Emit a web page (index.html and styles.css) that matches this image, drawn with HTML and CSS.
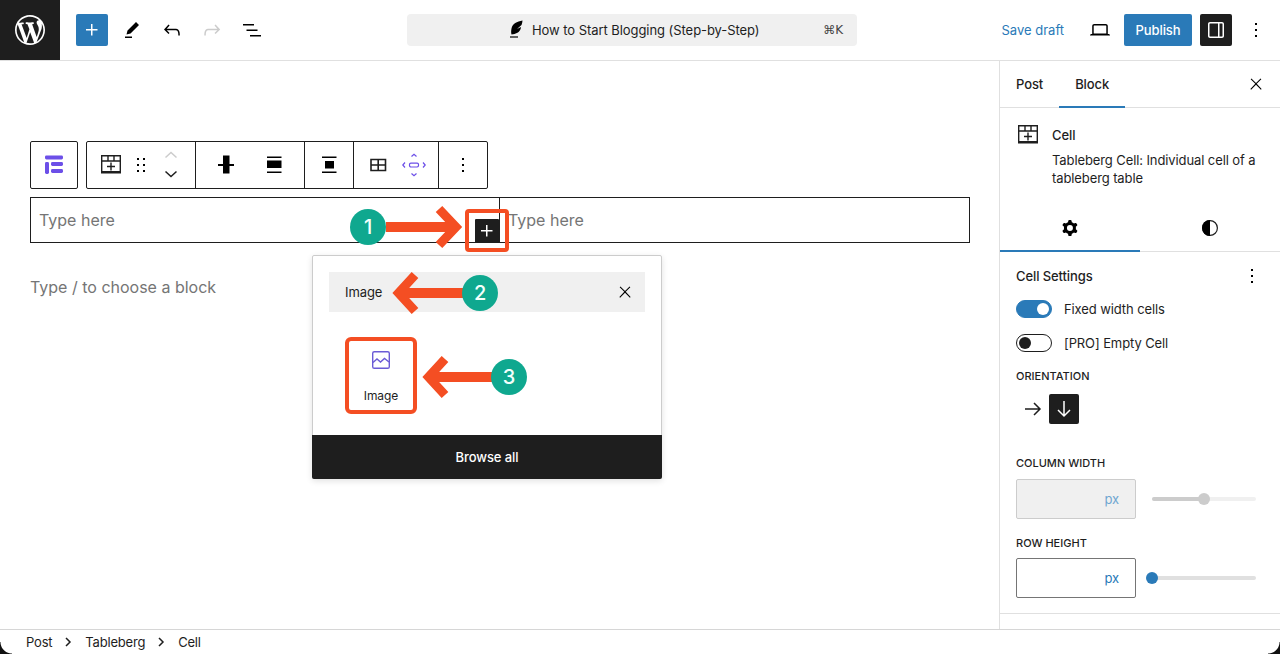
FILE: index.html
```html
<!DOCTYPE html>
<html lang="en">
<head>
    <meta charset="UTF-8">
    <meta name="viewport" content="width=device-width, initial-scale=1.0">
    <title>How to Start Blogging (Step-by-Step)</title>
    <link rel="stylesheet" href="styles.css">
</head>
<body>
    <header class="topbar">
        <div class="wp-logo">
            <svg width="30" height="30" viewBox="0 0 20 20"><path fill="#fff" d="M20 10c0-5.51-4.49-10-10-10C4.48 0 0 4.49 0 10c0 5.52 4.48 10 10 10 5.51 0 10-4.48 10-10zM7.78 15.37L4.37 6.22c.55-.02 1.17-.08 1.17-.08.5-.06.44-1.13-.06-1.11 0 0-1.45.11-2.37.11-.18 0-.37 0-.58-.01C4.12 2.69 6.87 1.11 10 1.11c2.33 0 4.45.87 6.05 2.34-.68-.11-1.65.39-1.65 1.58 0 .74.45 1.36.9 2.1.35.61.55 1.36.55 2.46 0 1.49-1.4 5-1.4 5l-3.03-8.37c.54-.02.82-.17.82-.17.5-.05.44-1.25-.06-1.22 0 0-1.44.12-2.38.12-.87 0-2.33-.12-2.33-.12-.5-.03-.56 1.2-.06 1.22l.92.08 1.26 3.41zM17.41 10c.24-.64.74-1.87.43-4.25.7 1.29 1.05 2.71 1.05 4.25 0 3.29-1.73 6.24-4.4 7.78.97-2.59 1.94-5.2 2.92-7.78zM6.1 18.09C3.12 16.65 1.11 13.53 1.11 10c0-1.3.23-2.48.72-3.59C3.25 10.3 4.67 14.2 6.1 18.09zm4.03-6.63l2.58 6.98c-.86.29-1.76.45-2.71.45-.79 0-1.57-.11-2.29-.33.81-2.38 1.62-4.74 2.42-7.1z"/></svg>
        </div>
        <div class="top-tools">
            <span class="icon-btn primary"><svg width="24" height="24" viewBox="0 0 24 24"><path fill="#fff" d="M11 12.5V17.5H12.5V12.5H17.5V11H12.5V6H11V11H6V12.5H11Z"/></svg></span>
            <span class="icon-btn"><svg width="24" height="24" viewBox="0 0 24 24"><path d="m19 7-3-3-8.5 8.5-1 4 4-1L19 7Zm-7 11.5H5V20h7v-1.5Z"/></svg></span>
            <span class="icon-btn"><svg width="24" height="24" viewBox="0 0 24 24"><path d="M18.3 11.7c-.6-.6-1.4-.9-2.3-.9H6.7l2.9-3.3-1.1-1-4.5 5L8.5 16l1-1-2.7-2.7H16c.5 0 .9.2 1.3.5 1 1 1 3.4 1 4.5v.3h1.5v-.2c0-1.5 0-4.3-1.5-5.7z"/></svg></span>
            <span class="icon-btn"><svg width="24" height="24" viewBox="0 0 24 24"><path fill="#ccc" d="M15.6 6.5l-1.1 1 2.9 3.3H8c-.9 0-1.7.3-2.3.9-1.4 1.5-1.4 4.2-1.4 5.6v.2h1.5v-.3c0-1.1 0-3.5 1-4.5.3-.3.7-.5 1.3-.5h9.2L14.5 15l1.1 1.1 4.6-4.6-4.6-5z"/></svg></span>
            <span class="icon-btn"><svg width="24" height="24" viewBox="0 0 24 24"><path d="M3 6h11v1.5H3V6Zm3.5 5.5h11V13h-11v-1.5ZM21 17H10v1.5h11V17Z"/></svg></span>
        </div>
        <div class="doc-bar">
            <svg width="24" height="24" viewBox="0 0 24 24"><path d="M18.5 2.500C13 3.500 8.500 5.500 7.500 10.500C7 13 7 15 7.500 16.500L10.500 16C14 15 16.500 13 17 9L13 11L17.500 7C18 5.500 18.500 4 18.500 2.500Z"/><path d="M6 18.400h8v1.200H6z"/></svg>
            <span class="doc-title">How to Start Blogging (Step-by-Step)</span>
            <span class="doc-key">⌘K</span>
        </div>
        <div class="top-actions">
            <span class="save-draft">Save draft</span>
            <span class="icon-btn"><svg width="24" height="24" viewBox="0 0 24 24"><path d="M20.5 16h-.7V8c0-1.1-.9-2-2-2H6.2c-1.1 0-2 .9-2 2v8h-.7c-.8 0-1.5.7-1.5 1.5h20c0-.8-.7-1.5-1.5-1.5zM5.7 8c0-.3.2-.5.5-.5h11.6c.3 0 .5.2.5.5v7.6H5.7V8z"/></svg></span>
            <span class="publish">Publish</span>
            <span class="icon-btn dark"><svg width="24" height="24" viewBox="0 0 24 24"><path fill="#fff" d="M18 4H6c-1.1 0-2 .9-2 2v12c0 1.1.9 2 2 2h12c1.1 0 2-.9 2-2V6c0-1.1-.9-2-2-2zm-4 14.5H6c-.3 0-.5-.2-.5-.5V6c0-.3.2-.5.5-.5h8v13zm4.5-.5c0 .3-.2.5-.5.5h-2.5v-13H18c.3 0 .5.2.5.5v12z"/></svg></span>
            <span class="icon-btn"><svg width="24" height="24" viewBox="0 0 24 24"><path d="M13 19h-2v-2h2v2zm0-6h-2v-2h2v2zm0-6h-2V5h2v2z"/></svg></span>
        </div>
    </header>

    <div class="main">
        <main class="editor">
            <div class="block-toolbar">
                <div class="tb-box tb-logo">
                    <svg width="24" height="24" viewBox="0 0 24 24"><g fill="#6c4fe8"><rect x="3" y="2.500" width="18" height="4" rx="1.400"/><rect x="3" y="9" width="4" height="12" rx="1.400"/><rect x="9" y="9" width="12" height="4" rx="1.400"/><rect x="9" y="16" width="12" height="4" rx="1.400"/></g></svg>
                </div>
                <div class="tb-box">
                    <div class="tb-group tb-move">
                        <svg width="24" height="24" viewBox="0 1 24 24"><path fill="none" stroke="#1e1e1e" stroke-width="1.400" d="M2.700 3.700h18.600v16.600H2.700zM2.700 9h18.600M9 3.700V9M15 3.700V9"/><path fill="#1e1e1e" d="M2 19h20v2.500H2zM11.300 10.500h1.400v3.300H16v1.400h-3.300v3.300h-1.400v-3.300H8v-1.400h3.300z"/></svg>
                        <svg width="24" height="24" viewBox="0 0 24 24"><path d="M8 7h2V5H8v2zm0 6h2v-2H8v2zm0 6h2v-2H8v2zm6-14v2h2V5h-2zm0 8h2v-2h-2v2zm0 6h2v-2h-2v2z"/></svg>
                        <svg width="24" height="34" viewBox="0 0 24 34"><path fill="none" stroke="#ccc" stroke-width="1.500" d="M6.500 9.500 12 4.500l5.500 5"/><path fill="none" stroke="#1e1e1e" stroke-width="1.500" d="M6.500 23.500 12 28.500l5.500-5"/></svg>
                    </div>
                    <div class="tb-group tb-align">
                        <svg width="24" height="24" viewBox="0 0 24 24"><path d="M4 11h16v2H4z"/><path d="M9 2.500h6.500v18H9z"/></svg>
                        <svg width="24" height="24" viewBox="0 0 24 24"><path d="M5 3.500h14.500V5H5zM5 7.500h14.500v7.500H5zM5 18.500h14.500V20H5z"/></svg>
                    </div>
                    <div class="tb-group tb-single">
                        <svg width="24" height="24" viewBox="0 0 24 24"><path d="M5 3.500h14.500V5H5zM8 8h9v7.500H8zM5 18.500h14.500V20H5z"/></svg>
                    </div>
                    <div class="tb-group tb-size">
                        <svg width="24" height="24" viewBox="0 0 24 24"><path fill="none" stroke="#1e1e1e" stroke-width="1.600" d="M5 6.500h14.500v11H5zM5 12h14.500M12.200 6.500v11"/></svg>
                        <svg width="24" height="24" viewBox="0 0 24 24" fill="none" stroke="#6c4fe8" stroke-width="1.200"><rect x="7.500" y="10.200" width="9" height="3.800" rx="1.400"/><path d="M9.500 3.500 12 1.300l2.500 2.200M9.500 20.500 12 22.700l2.500-2.200M3 9.500.8 12 3 14.500M21 9.500 23.200 12 21 14.500"/></svg>
                    </div>
                    <div class="tb-group tb-single tb-last">
                        <svg width="24" height="24" viewBox="0 0 24 24"><path d="M13 19h-2v-2h2v2zm0-6h-2v-2h2v2zm0-6h-2V5h2v2z"/></svg>
                    </div>
                </div>
            </div>

            <div class="table-row">
                <div class="table-cell">Type here</div>
                <div class="table-cell">Type here</div>
            </div>

            <p class="placeholder">Type / to choose a block</p>

            <div class="inserter">
                <div class="inserter-search">
                    <span>Image</span>
                    <svg width="18" height="18" viewBox="0 0 24 24"><path d="M13 11.800l6.100-6.300-1-1-6.100 6.200-6.100-6.200-1 1 6.100 6.300-6.500 6.700 1 1 6.500-6.600 6.500 6.600 1-1z"/></svg>
                </div>
                <div class="inserter-tile">
                    <svg width="24" height="24" viewBox="0 0 24 24" fill="none" stroke="#6b5bd6" stroke-width="1.400"><rect x="3.700" y="3.700" width="16.600" height="16.600" rx="1.600"/><path d="M4 14.500 8 11l3.500 3 4-3.500 4.500 3.500"/></svg>
                    <span>Image</span>
                </div>
                <div class="browse-all">Browse all</div>
            </div>

            <div class="add-mark">
                <span class="add-btn"><svg width="24" height="24" viewBox="0 0 24 24"><path fill="#fff" d="M11 12.500V17.500H12.500V12.500H17.500V11H12.500V6H11V11H6V12.500H11Z"/></svg></span>
            </div>

            <svg class="arrow arrow-one" width="80" height="44" viewBox="0 0 80 44"><path fill="none" stroke="#f44e23" stroke-width="10" d="M0 22H68"/><path fill="none" stroke="#f44e23" stroke-width="9" d="M53 4 70 22 53 40"/></svg>
            <svg class="arrow arrow-two" width="80" height="44" viewBox="0 0 80 44"><path fill="none" stroke="#f44e23" stroke-width="10" d="M80 22H16"/><path fill="none" stroke="#f44e23" stroke-width="9" d="M31 4 14.500 22 31 40"/></svg>
            <svg class="arrow arrow-three" width="80" height="44" viewBox="0 0 80 44"><path fill="none" stroke="#f44e23" stroke-width="10" d="M80 22H16"/><path fill="none" stroke="#f44e23" stroke-width="9" d="M31 4 14.500 22 31 40"/></svg>
            <span class="step step-one">1</span>
            <span class="step step-two">2</span>
            <span class="step step-three">3</span>
        </main>

        <aside class="sidebar">
            <div class="side-tabs">
                <span class="side-tab">Post</span>
                <span class="side-tab active">Block</span>
                <svg class="side-close" width="18" height="18" viewBox="0 0 24 24"><path d="M13 11.800l6.100-6.300-1-1-6.100 6.200-6.100-6.200-1 1 6.100 6.300-6.500 6.700 1 1 6.500-6.600 6.500 6.600 1-1z"/></svg>
            </div>
            <div class="block-card">
                <svg width="24" height="24" viewBox="0 1 24 24"><path fill="none" stroke="#1e1e1e" stroke-width="1.400" d="M2.700 3.700h18.600v16.600H2.700zM2.700 9h18.600M9 3.700V9M15 3.700V9"/><path fill="#1e1e1e" d="M2 19h20v2.500H2zM11.300 10.500h1.400v3.300H16v1.400h-3.300v3.300h-1.400v-3.300H8v-1.400h3.300z"/></svg>
                <div>
                    <div class="block-name">Cell</div>
                    <div class="block-desc">Tableberg Cell: Individual cell of a tableberg table</div>
                </div>
            </div>
            <div class="panel-tabs">
                <span class="panel-tab active"><svg width="24" height="24" viewBox="0 0 24 24"><path fill-rule="evenodd" d="M10.289 4.836A1 1 0 0111.275 4h1.306a1 1 0 01.987.836l.244 1.466c.787.26 1.503.679 2.108 1.218l1.393-.522a1 1 0 011.216.437l.653 1.130a1 1 0 01-.23 1.273l-1.148.944a6.025 6.025 0 010 2.435l1.149.946a1 1 0 01.23 1.272l-.653 1.130a1 1 0 01-1.216.437l-1.394-.522c-.605.54-1.320.958-2.108 1.218l-.244 1.466a1 1 0 01-.987.836h-1.306a1 1 0 01-.986-.836l-.244-1.466a5.995 5.995 0 01-2.108-1.218l-1.394.522a1 1 0 01-1.217-.436l-.653-1.131a1 1 0 01.23-1.272l1.149-.946a6.026 6.026 0 010-2.435l-1.148-.944a1 1 0 01-.23-1.272l.653-1.131a1 1 0 011.217-.437l1.393.522a5.994 5.994 0 012.108-1.218l.244-1.466zM14.929 12a3 3 0 11-6 0 3 3 0 016 0z"/></svg></span>
                <span class="panel-tab"><svg width="24" height="24" viewBox="0 0 24 24"><circle cx="12" cy="12" r="7.400" fill="none" stroke="#1e1e1e" stroke-width="1.200"/><path d="M12 4a8 8 0 000 16z"/></svg></span>
            </div>
            <section class="settings">
                <div class="settings-head">
                    <span>Cell Settings</span>
                    <svg width="24" height="24" viewBox="0 0 24 24"><path d="M13 19h-2v-2h2v2zm0-6h-2v-2h2v2zm0-6h-2V5h2v2z"/></svg>
                </div>
                <div class="toggle-row"><span class="toggle on"><i></i></span>Fixed width cells</div>
                <div class="toggle-row"><span class="toggle"><i></i></span>[PRO] Empty Cell</div>
                <div class="field-label orientation-label">ORIENTATION</div>
                <div class="orientation">
                    <span class="orient-btn"><svg width="24" height="24" viewBox="0 0 24 24"><path fill="none" stroke="#1e1e1e" stroke-width="1.500" d="M4 12h15M13 6l6 6-6 6"/></svg></span>
                    <span class="orient-btn selected"><svg width="24" height="24" viewBox="0 0 24 24"><path fill="none" stroke="#fff" stroke-width="1.500" d="M12 4v15M6 13l6 6 6-6"/></svg></span>
                </div>
                <div class="field-label width-label">COLUMN WIDTH</div>
                <div class="size-row">
                    <div class="size-input disabled">px</div>
                    <div class="slider disabled"><span class="slider-fill"></span><span class="slider-thumb"></span></div>
                </div>
                <div class="field-label height-label">ROW HEIGHT</div>
                <div class="size-row">
                    <div class="size-input">px</div>
                    <div class="slider"><span class="slider-thumb start"></span></div>
                </div>
            </section>
        </aside>
    </div>

    <footer class="statusbar">
        <span>Post</span>
        <svg class="crumb-sep" width="24" height="24" viewBox="0 0 24 24"><path fill="none" stroke="#1e1e1e" stroke-width="1.500" d="M10 8l4 4-4 4"/></svg>
        <span>Tableberg</span>
        <svg class="crumb-sep" width="24" height="24" viewBox="0 0 24 24"><path fill="none" stroke="#1e1e1e" stroke-width="1.500" d="M10 8l4 4-4 4"/></svg>
        <span>Cell</span>
    </footer>
    <span class="corner corner-left"></span>
    <span class="corner corner-right"></span>
</body>
</html>
```

FILE: styles.css
```css
* {
    box-sizing: border-box;
}
body {
    font-family: Inter, "Noto Sans", sans-serif;
    font-size: 13px;
    letter-spacing: -0.1px;
    color: #1e1e1e;
    background: #fff;
    margin: 0;
    height: 100vh;
    display: flex;
    flex-direction: column;
    overflow: hidden;
}
svg {
    display: block;
    flex: none;
}

/* top bar */
.topbar {
    height: 61px;
    flex: none;
    display: flex;
    align-items: center;
    border-bottom: 1px solid #e0e0e0;
}
.wp-logo {
    width: 60px;
    height: 60px;
    background: #1e1e1e;
    display: flex;
    align-items: center;
    justify-content: center;
}
.top-tools {
    display: flex;
    gap: 8px;
    margin-left: 16px;
}
.icon-btn {
    width: 32px;
    height: 32px;
    border-radius: 2px;
    display: flex;
    align-items: center;
    justify-content: center;
}
.icon-btn.primary {
    background: #2a7ab8;
}
.icon-btn.dark {
    background: #1e1e1e;
}
.doc-bar {
    width: 450px;
    height: 32px;
    margin-left: 139px;
    padding: 0 14px 0 97px;
    background: #f0f0f0;
    border-radius: 4px;
    display: flex;
    align-items: center;
}
.doc-title {
    margin-left: 4px;
    letter-spacing: -0.06px;
}
.doc-key {
    margin-left: auto;
    color: #444;
    font-family: "DejaVu Sans", Inter, sans-serif;
    font-size: 12px;
}
.top-actions {
    margin-left: auto;
    display: flex;
    align-items: center;
    gap: 8px;
    padding-right: 8px;
}
.save-draft {
    color: #2a7ab8;
    letter-spacing: 0;
    margin-right: 12px;
}
.publish {
    width: 68px;
    height: 32px;
    background: #2a7ab8;
    color: #fff;
    font-weight: 500;
    border-radius: 2px;
    display: flex;
    align-items: center;
    justify-content: center;
}

.main {
    flex: 1;
    display: flex;
    min-height: 0;
}

/* editor canvas */
.editor {
    flex: 1;
    position: relative;
    padding: 80px 29px 0 30px;
}
.block-toolbar {
    display: flex;
    gap: 8px;
}
.tb-box {
    height: 48px;
    border: 1px solid #1e1e1e;
    border-radius: 2px;
    display: flex;
}
.tb-logo {
    width: 48px;
    align-items: center;
    justify-content: center;
}
.tb-group {
    display: flex;
    align-items: center;
    border-right: 1px solid #1e1e1e;
}
.tb-move {
    width: 109px;
    gap: 6px;
    padding-left: 12px;
}
.tb-align {
    width: 109px;
    gap: 24px;
    padding-left: 18px;
}
.tb-single {
    width: 49px;
    padding-left: 12px;
}
.tb-size {
    width: 85px;
    gap: 12px;
    padding-left: 12px;
}
.tb-last {
    width: 48px;
    border-right: none;
}
.table-row {
    display: flex;
    height: 46px;
    margin-top: 8px;
    border: 1px solid #1e1e1e;
}
.table-cell {
    flex: 1;
    padding: 0 8px;
    font-size: 16px;
    letter-spacing: 0;
    color: #757575;
    line-height: 44px;
    height: 44px;
}
.table-cell:first-child {
    flex: 0 0 468px;
}
.table-cell + .table-cell {
    border-left: 1px solid #1e1e1e;
}
.placeholder {
    margin: 32px 0 0;
    font-size: 16px;
    letter-spacing: 0;
    line-height: 24px;
    color: #757575;
}

/* inserter popover */
.inserter {
    position: absolute;
    left: 312px;
    top: 194px;
    width: 350px;
    height: 224px;
    background: #fff;
    border: 1px solid #ccc;
    border-radius: 2px;
    box-shadow: 0 2px 6px rgba(0, 0, 0, 0.12);
    padding: 16px 16px 0;
    display: flex;
    flex-direction: column;
}
.inserter-search {
    height: 40px;
    background: #f0f0f0;
    padding: 0 11px 0 16px;
    display: flex;
    align-items: center;
    justify-content: space-between;
    flex: none;
}
.inserter-tile {
    width: 72px;
    height: 77px;
    margin: 25px 0 0 16px;
    border: 4px solid #f44e23;
    border-radius: 6px;
    padding-top: 7px;
    font-size: 12px;
    display: flex;
    flex-direction: column;
    align-items: center;
    gap: 16px;
}
.browse-all {
    margin: auto -17px -1px;
    height: 44px;
    background: #1e1e1e;
    color: #fff;
    font-weight: 500;
    border-radius: 0 0 2px 2px;
    display: flex;
    align-items: center;
    justify-content: center;
}

/* numbered arrows drawn over the screenshot */
.add-mark {
    position: absolute;
    left: 465px;
    top: 148px;
    width: 44px;
    height: 43px;
    border: 4px solid #f44e23;
    border-radius: 4px;
    display: flex;
    align-items: center;
    justify-content: center;
}
.add-btn {
    width: 24px;
    height: 24px;
    background: #1e1e1e;
    border-radius: 1px;
    display: flex;
    align-items: center;
    justify-content: center;
}
.arrow {
    position: absolute;
}
.arrow-one {
    left: 386px;
    top: 144px;
}
.arrow-two {
    left: 384px;
    top: 210px;
}
.arrow-three {
    left: 414px;
    top: 294px;
}
.step {
    position: absolute;
    width: 36px;
    height: 36px;
    border-radius: 50%;
    background: #0fa88f;
    color: #f2fffb;
    font-size: 20px;
    font-weight: 500;
    display: flex;
    align-items: center;
    justify-content: center;
}
.step-one {
    left: 350px;
    top: 148px;
}
.step-two {
    left: 462px;
    top: 214px;
}
.step-three {
    left: 491px;
    top: 298px;
}

/* settings sidebar */
.sidebar {
    width: 281px;
    flex: none;
    border-left: 1px solid #e0e0e0;
}
.side-tabs {
    height: 47px;
    border-bottom: 1px solid #e0e0e0;
    display: flex;
    align-items: stretch;
}
.side-tab {
    padding: 0 16px;
    font-weight: 500;
    display: flex;
    align-items: center;
}
.side-tab.active {
    box-shadow: inset 0 -1px 0 #2a7ab8, 0 1px 0 #2a7ab8;
}
.side-close {
    margin: 14px 15px 0 auto;
}
.block-card {
    display: flex;
    gap: 12px;
    padding: 16px 16px 0;
    height: 99px;
}
.block-card svg {
    margin-top: -1px;
}
.block-name {
    font-weight: 500;
    line-height: 18px;
    margin: 2px 0 7px;
}
.block-desc {
    line-height: 18px;
}
.panel-tabs {
    display: flex;
    height: 45px;
    box-shadow: inset 0 -1px 0 #e0e0e0;
}
.panel-tab {
    flex: 1;
    display: flex;
    align-items: center;
    justify-content: center;
    padding-bottom: 3px;
}
.panel-tab.active {
    box-shadow: inset 0 -2px 0 #2a7ab8;
}
.settings {
    padding: 15px 16px 15px;
    border-bottom: 1px solid #e0e0e0;
}
.settings-head {
    height: 18px;
    font-weight: 500;
    display: flex;
    align-items: center;
    justify-content: space-between;
    margin-bottom: 15px;
}
.toggle-row {
    display: flex;
    align-items: center;
    gap: 12px;
    height: 18px;
    margin-bottom: 16px;
}
.toggle {
    width: 36px;
    height: 18px;
    border: 1px solid #1e1e1e;
    border-radius: 9px;
    padding: 0 2px;
    display: flex;
    align-items: center;
}
.toggle i {
    width: 12px;
    height: 12px;
    border-radius: 50%;
    background: #1e1e1e;
}
.toggle.on {
    background: #2a7ab8;
    border-color: #2a7ab8;
    justify-content: flex-end;
}
.toggle.on i {
    background: #fff;
}
.field-label {
    font-size: 11px;
    font-weight: 500;
    letter-spacing: 0;
    line-height: 16px;
}
.orientation {
    display: flex;
    gap: 1px;
    padding-left: 2px;
    margin-top: 10px;
}
.orient-btn {
    width: 30px;
    height: 30px;
    border-radius: 2px;
    display: flex;
    align-items: center;
    justify-content: center;
}
.orient-btn.selected {
    background: #1e1e1e;
}
.width-label {
    margin-top: 31px;
    margin-bottom: 8px;
}
.height-label {
    margin-top: 16px;
    margin-bottom: 7px;
}
.size-row {
    display: flex;
    align-items: center;
    gap: 16px;
}
.size-input {
    width: 120px;
    height: 40px;
    border: 1px solid #757575;
    border-radius: 2px;
    padding-right: 16px;
    color: #2a7ab8;
    display: flex;
    align-items: center;
    justify-content: flex-end;
}
.size-input.disabled {
    background: #f0f0f0;
    border-color: #ccc;
    color: #6fa6d0;
}
.slider {
    width: 104px;
    height: 4px;
    background: #e0e0e0;
    border-radius: 2px;
    position: relative;
}
.slider.disabled {
    background: #f0f0f0;
}
.slider-fill {
    position: absolute;
    left: 0;
    top: 0;
    width: 52px;
    height: 4px;
    background: #ccc;
    border-radius: 2px;
}
.slider-thumb {
    position: absolute;
    left: 46px;
    top: -4px;
    width: 12px;
    height: 12px;
    border-radius: 50%;
    background: #ccc;
}
.slider-thumb.start {
    left: -6px;
    background: #2a7ab8;
}

/* breadcrumb */
.statusbar {
    height: 25px;
    flex: none;
    border-top: 1px solid #d6d6d6;
    padding-left: 26px;
    letter-spacing: -0.2px;
    display: flex;
    align-items: center;
}
.crumb-sep {
    margin: 0 5px 0 4px;
}
.corner {
    position: absolute;
    bottom: 0;
    width: 12px;
    height: 12px;
}
.corner-left {
    left: 0;
    background: radial-gradient(circle at top right, transparent 11px, #111 12px);
}
.corner-right {
    right: 0;
    background: radial-gradient(circle at top left, transparent 11px, #111 12px);
}
```
